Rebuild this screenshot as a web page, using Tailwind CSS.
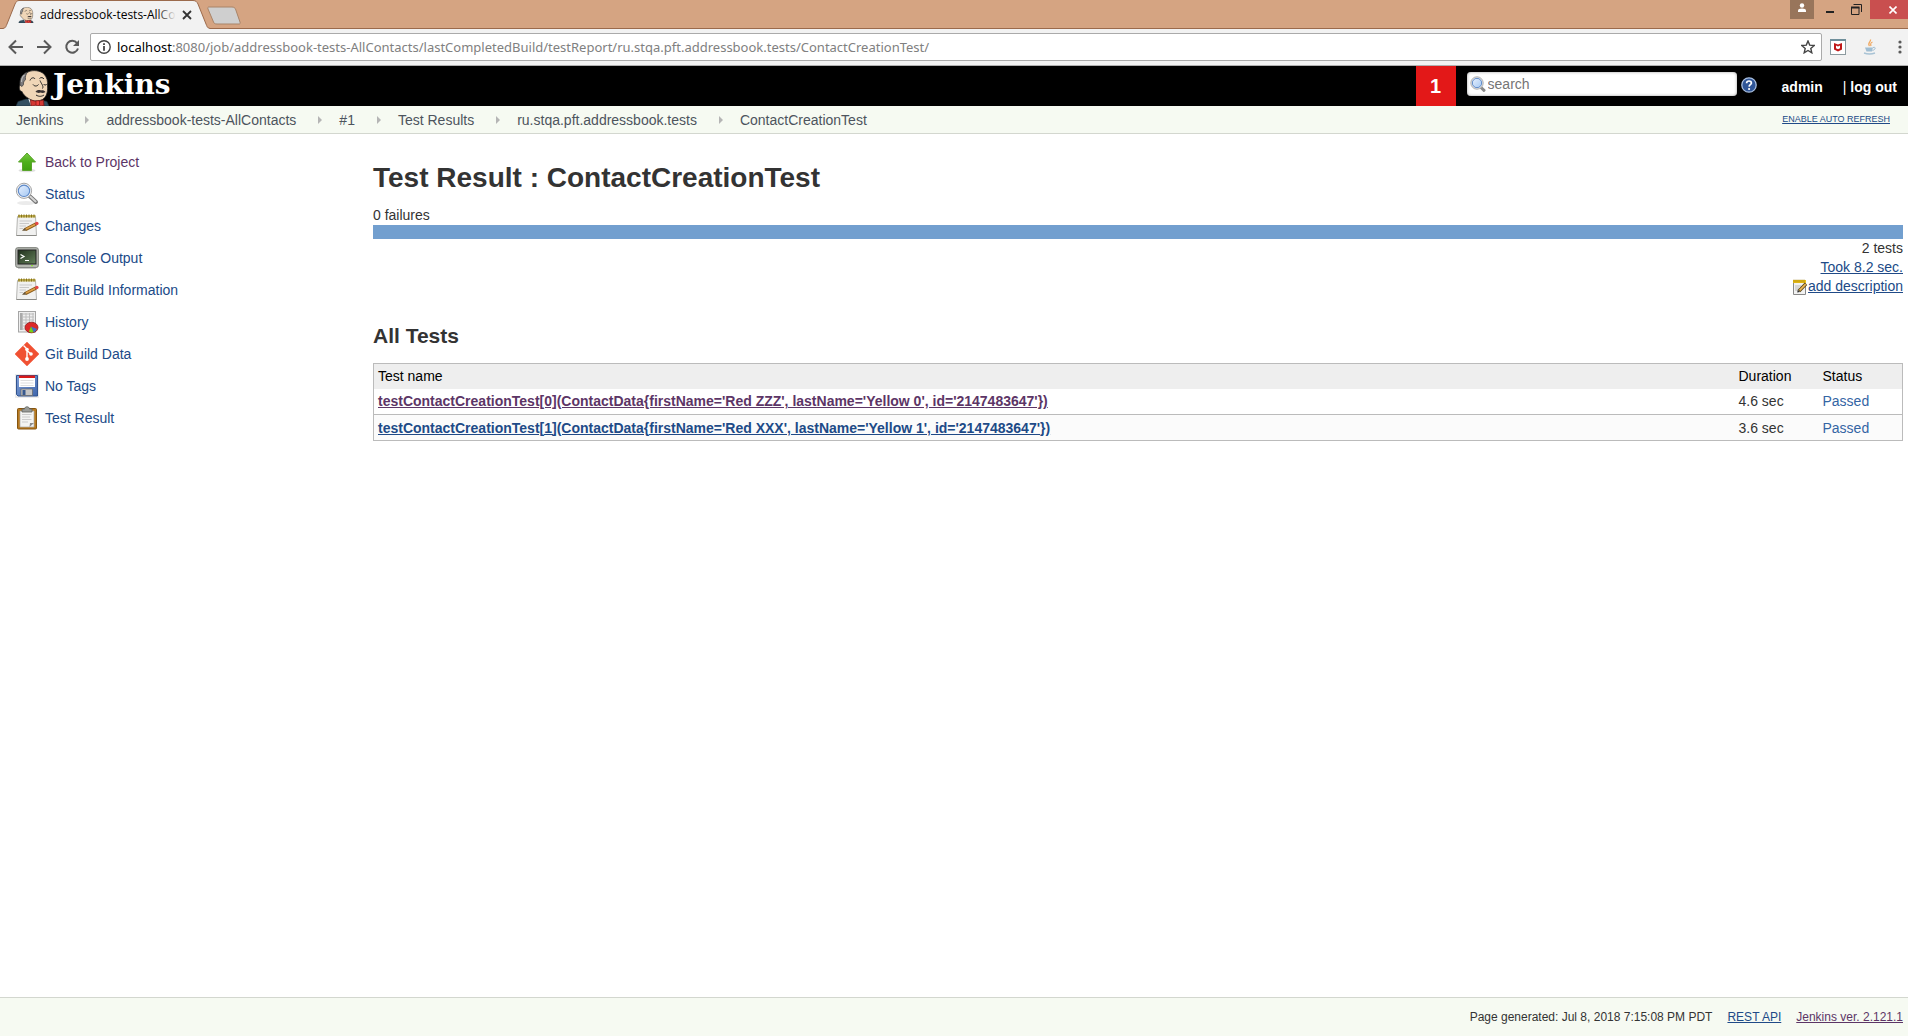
<!DOCTYPE html>
<html lang="en">
<head>
<meta charset="utf-8">
<title>addressbook-tests-AllContacts</title>
<script src="https://cdn.jsdelivr.net/npm/@tailwindcss/browser@4"></script>
</head>
<body class="flex min-h-screen flex-col bg-white font-['Liberation_Sans',Arial,sans-serif] text-sm text-[#333]">

<!-- Shared icons -->
<svg class="absolute h-0 w-0" aria-hidden="true">
  <defs>
    <linearGradient id="gGreen" x1="0" y1="0" x2="0" y2="1"><stop offset="0" stop-color="#7ac943"/><stop offset=".5" stop-color="#4fb01c"/><stop offset="1" stop-color="#3fa010"/></linearGradient>
    <linearGradient id="gLens" x1="0" y1="0" x2="1" y2="1"><stop offset="0" stop-color="#e6f0ff"/><stop offset="1" stop-color="#a5c8f2"/></linearGradient>
    <linearGradient id="gScreen" x1="0" y1="0" x2="1" y2="1"><stop offset="0" stop-color="#1f2f1c"/><stop offset="1" stop-color="#64805a"/></linearGradient>
    <linearGradient id="gBlue" x1="0" y1="0" x2="1" y2="1"><stop offset="0" stop-color="#7f9fd6"/><stop offset="1" stop-color="#3f66ac"/></linearGradient>
    <symbol id="butler" viewBox="0 0 33 36">
      <path d="M0 36 2 31.500 10 29 25 30 31 31.500 33 36Z" fill="#335061" stroke="#1b2a33" stroke-width=".6"/>
      <path d="M12 28 25 30 26 36 15 36Z" fill="#f5f5f5"/>
      <path d="M12 2C17-.500 24 .500 28 4c3 3.500 4 7 3.500 12 .500 6-1 11-5 13.500-4 2-9 2-13-.500C9 26.500 7 24 6 21.500 3.500 22 2.500 17 4 15 4 8 6 4 12 2Z" fill="#f0d6b7" stroke="#222" stroke-width=".8"/>
      <path d="M11.500 2.200C6 4 3.500 9 4 15L6 16.500 7.500 14.500C7 12 8.500 11 9.500 9.500 9 6.500 10 4 11.500 2.200Z" fill="#7d7b7d" stroke="#333" stroke-width=".7"/>
      <path d="M5.500 12C5.500 8.500 7 6 8.500 5" fill="none" stroke="#b8b8b8" stroke-width="1.200"/>
      <path d="M14 10.500C15 7.500 18 7 19 9M23.500 8.500C25 7 27 7.500 28 9M17 14.500C18.500 16.500 21 16.500 22.500 14.500M27.500 14C28.500 15.500 30 15.300 30.800 14M24 10.500C25 13.500 28 16 26.500 18.500M20 25C23 27 26 26.500 28 25" fill="none" stroke="#222" stroke-width="1"/>
      <path d="M19.500 21.500C21.500 20 23.500 19.800 25 20.500 26.500 19.800 28.500 20.500 29.500 22 27.500 23.300 25.500 23 24.500 22.500 23 23.300 21 23 19.500 21.500Z" fill="#3b3434"/>
      <path d="M14.500 30 20.500 31.500 27.500 30 28 36 21 35 15 36Z" fill="#d33833" stroke="#7d1714" stroke-width=".8"/>
      <rect x="20" y="30.800" width="3.500" height="4.500" fill="#ef3d3a" stroke="#7d1714" stroke-width=".7"/>
    </symbol>
    <symbol id="lens" viewBox="0 0 24 24">
      <ellipse cx="11" cy="21" rx="9" ry="2" fill="#000" opacity=".08"/>
      <path d="M14.500 14 21 20" stroke="#777" stroke-width="4" stroke-linecap="round"/>
      <path d="M15.500 14.800 20.600 19.400" stroke="#d4d4d4" stroke-width="2" stroke-linecap="round"/>
      <circle cx="9" cy="8.800" r="7.600" fill="#f4f4f4" stroke="#a5a5a5" stroke-width="1"/>
      <circle cx="9" cy="8.800" r="5.700" fill="url(#gLens)" stroke="#5c88c8" stroke-width="1.100"/>
    </symbol>
    <symbol id="fieldlens" viewBox="0 0 16 16">
      <path d="M10.500 11 14 14.300" stroke="#8a8a8a" stroke-width="3" stroke-linecap="round"/>
      <circle cx="7" cy="7" r="6.200" fill="#eee" stroke="#999" stroke-width=".8"/>
      <circle cx="7" cy="7" r="4.700" fill="url(#gLens)" stroke="#5c88c8" stroke-width="1"/>
    </symbol>
    <symbol id="notepad" viewBox="0 0 24 24">
      <path d="M2.500 2.500H20.500L21.500 21.500H1.500Z" fill="#f1f1f0" stroke="#b5b5b2"/>
      <path d="M1.500 21.500H21.500" stroke="#8a8a86"/>
      <rect x="3" y="1" width="17.500" height="2.500" fill="#c2b04f"/>
      <path d="M4 .500V3.500M6.500 .500V3.500M9 .500V3.500M11.500 .500V3.500M14 .500V3.500M16.500 .500V3.500M19 .500V3.500" stroke="#857220"/>
      <path d="M4.500 7H17M4.500 9.500H14M4.500 12H11M4.500 14.500H8" stroke="#c9c9c9"/>
      <path d="M10.500 15.500 21 10" stroke="#8a5a16" stroke-width="3.200"/>
      <path d="M11 15 20 10.400" stroke="#dda04a" stroke-width="1.700"/>
      <path d="M7 16.800 9.700 13.800 11.300 16.800Z" fill="#6a5636"/>
      <circle cx="21.800" cy="9.500" r="1.800" fill="#e34848"/>
    </symbol>
    <symbol id="smallpad" viewBox="0 0 16 16">
      <path d="M1.500 2.500H13.500V15.500H1.500Z" fill="#f2f2f2" stroke="#888"/>
      <rect x="1" y="1" width="13" height="3" fill="#f0c419"/>
      <path d="M2 .500V3.500M4 .500V3.500M6 .500V3.500M8 .500V3.500M10 .500V3.500M12 .500V3.500" stroke="#97770c" stroke-width=".7"/>
      <path d="M3 7H9M3 9H7M3 11H6" stroke="#bbb"/>
      <path d="M7 12 14 4.800" stroke="#5e4716" stroke-width="3.400"/>
      <path d="M7.600 11.300 13.700 5.100" stroke="#efb956" stroke-width="1.700"/>
      <path d="M5.200 13.500 5.800 10.800 8 13Z" fill="#333"/>
    </symbol>
    <symbol id="crumb" viewBox="0 0 4 8"><path d="M0 0 4 4 0 8Z" fill="#b5b5b5"/></symbol>
  </defs>
</svg>

<!-- Browser chrome -->
<div class="flex h-[29px] shrink-0 items-stretch border-b border-[#9b6a4c] bg-[#d5a482] font-['Open_Sans','Noto_Sans',sans-serif]">
  <div class="relative flex h-[29px] w-[210px] shrink-0 items-center pl-[18px] pr-[16px]">
    <svg class="absolute left-0 top-0 h-[29px] w-[210px]" viewBox="0 0 210 29" aria-hidden="true"><path d="M3 28.500C6 28 6 26 7 24L15 4C16 2 17 .500 19 .500H193C196 .500 197 2 198 4L206 24C207 26 207 28 210 28.500V29H3Z" fill="#f2f2f2"/><path d="M0 28.500H3C6 28 6 26 7 24L15 4C16 2 17 .500 19 .500H193C196 .500 197 2 198 4L206 24C207 26 207 28 210 28.500" fill="none" stroke="#9b6a4c"/></svg>
    <svg class="relative h-4 w-4" aria-hidden="true"><use href="#butler"/></svg>
    <span class="relative ml-[6px] w-[136px] whitespace-nowrap text-xs text-black">addressbook-tests-AllCo<span class="absolute inset-y-0 right-0 w-5 bg-gradient-to-r from-[#f2f2f2]/0 to-[#f2f2f2]"></span></span>
    <button class="relative ml-[6px]" aria-label="Close tab"><svg class="h-[10px] w-[10px]" viewBox="0 0 10 10"><path d="M1 1 9 9M9 1 1 9" stroke="#333" stroke-width="1.800"/></svg></button>
  </div>
  <button class="-ml-1 mt-[6px] h-[19px] w-9 shrink-0" aria-label="New tab"><svg class="h-[19px] w-9" viewBox="0 0 36 19"><path d="M3 1H26C28 1 29 2 29.500 3L34 16C34.500 17.500 34 18 33 18H11C9 18 8 17.500 7.500 16L2 3C1.500 1.500 2 1 3 1Z" fill="#cfcfcf" stroke="#a98468"/></svg></button>
  <div class="ml-auto flex items-start">
    <button class="flex h-[19px] w-6 items-center justify-center bg-[#98755b] pb-[3px]" aria-label="Profile"><svg class="h-[10px] w-[10px]" viewBox="0 0 10 10" fill="#fff"><circle cx="5" cy="2.500" r="2.200"/><path d="M1 9V7.500Q1 5.500 5 5.500T9 7.500V9Z"/></svg></button>
    <button class="flex h-[19px] w-8 items-end justify-center pb-[6px]" aria-label="Minimize"><svg class="h-[2px] w-2" viewBox="0 0 8 2"><rect width="8" height="2" fill="#222"/></svg></button>
    <button class="flex h-[19px] w-5 items-center justify-center" aria-label="Restore"><svg class="h-[11px] w-[11px]" viewBox="0 0 11 11" fill="none" stroke="#222"><path d="M2.500 .500H10.500V8M.500 3.500H8V10.500H.500Z"/><path d="M0 3.500H8.500" stroke-width="2"/></svg></button>
    <button class="ml-1 flex h-[19px] w-[38px] items-center justify-center bg-[#c94f4f] pl-2" aria-label="Close"><svg class="h-2 w-2" viewBox="0 0 8 8"><path d="M.500 .500 7.500 7.500M7.500 .500 .500 7.500" stroke="#fff" stroke-width="1.600"/></svg></button>
  </div>
</div>

<div class="flex h-[37px] shrink-0 items-center border-b border-[#b0b0b0] bg-[#f2f2f2] pl-2">
  <div class="flex items-center gap-3">
    <button aria-label="Back"><svg class="h-4 w-4" viewBox="0 0 16 16" fill="none" stroke="#5a5a5a" stroke-width="2"><path d="M15 8H2M8 1.500 1.500 8 8 14.500"/></svg></button>
    <button aria-label="Forward"><svg class="h-4 w-4" viewBox="0 0 16 16" fill="none" stroke="#5a5a5a" stroke-width="2"><path d="M1 8H14M8 1.500 14.500 8 8 14.500"/></svg></button>
    <button aria-label="Reload"><svg class="h-4 w-4" viewBox="0 0 16 16"><path d="M13 4A6 6 0 1 0 14 9.500" fill="none" stroke="#5a5a5a" stroke-width="2"/><path d="M15 1V7H9Z" fill="#5a5a5a"/></svg></button>
  </div>
  <div class="ml-[10px] flex h-7 grow items-center rounded-xs border border-[#aaa] bg-white pl-[6px] pr-[6px]">
    <svg class="h-[14px] w-[14px] shrink-0" viewBox="0 0 14 14" aria-hidden="true"><circle cx="7" cy="7" r="6.200" fill="none" stroke="#444" stroke-width="1.400"/><path d="M6.100 6H7.900V10.800H6.100ZM6.100 3.200H7.900V4.900H6.100Z" fill="#444"/></svg>
    <div class="grow pl-[6px] font-['Noto_Sans','Open_Sans',sans-serif] text-[13px] text-[#808080]"><span class="text-black">localhost</span>:8080/job/addressbook-tests-AllContacts/lastCompletedBuild/testReport/ru.stqa.pft.addressbook.tests/ContactCreationTest/</div>
    <button aria-label="Bookmark"><svg class="h-[14px] w-[14px]" viewBox="0 0 14 14"><path d="M7 1 8.700 5.100 13.200 5.500 9.800 8.400 10.800 12.800 7 10.500 3.200 12.800 4.200 8.400 .800 5.500 5.300 5.100Z" fill="none" stroke="#444" stroke-width="1.400"/></svg></button>
  </div>
  <div class="flex items-center pl-2">
    <button aria-label="Web protection"><svg class="h-4 w-4" viewBox="0 0 16 16"><rect x=".500" y=".500" width="15" height="15" fill="#fff" stroke="#8c9a9f"/><rect width="16" height="2" fill="#6f8f9b"/><path d="M4 4 8 5.500 12 4V10.500L8 12.500 4 10.500Z" fill="#c01818"/><path d="M6 6.500 8 7.500 10 6.500V9.300L8 10.300 6 9.300Z" fill="#fff"/></svg></button>
    <button class="ml-4" aria-label="Java"><svg class="h-4 w-4" viewBox="0 0 16 16" fill="none"><path d="M8.500 .500C9 3 5 4 7.500 7M10.500 3C8 4 8.500 5 9 7" stroke="#f0a860" stroke-width="1.300"/><path d="M3 8.500H11L10 12.500H4.500Z" fill="#9fbdd2"/><path d="M11 8.500C14 7.500 14 10.500 10.500 11.500" stroke="#9fbdd2"/><path d="M2 14Q7.500 16 13 14" stroke="#a9c3d5" stroke-width="1.400"/></svg></button>
    <button class="ml-[14px]" aria-label="Menu"><svg class="h-4 w-4" viewBox="0 0 16 16" fill="#5a5a5a"><circle cx="8" cy="3" r="1.600"/><circle cx="8" cy="8" r="1.600"/><circle cx="8" cy="13" r="1.600"/></svg></button>
  </div>
</div>

<!-- Jenkins header -->
<header class="flex h-10 shrink-0 items-stretch bg-black text-white">
  <a href="#" class="flex items-center pl-4">
    <svg class="mt-1 h-9 w-[33px]" aria-hidden="true"><use href="#butler"/></svg>
    <span class="ml-1 pb-[2px] font-['DejaVu_Serif',serif] text-[28px] font-bold leading-9">Jenkins</span>
  </a>
  <a href="#" class="ml-auto flex w-10 items-center justify-center bg-[#e31818] text-xl font-bold">1</a>
  <form class="ml-[11px] flex items-start pt-[6px]">
    <label class="flex h-6 w-[270px] items-center rounded-sm bg-white pl-[3px] shadow-[inset_0_0_3px_#999]">
      <svg class="h-4 w-4 shrink-0" aria-hidden="true"><use href="#fieldlens"/></svg>
      <input type="text" placeholder="search" aria-label="search" class="w-full bg-transparent pl-[2px] text-sm text-[#333] outline-none placeholder:text-[#757575]">
    </label>
    <a href="#" class="ml-1 mt-[5px]" aria-label="Help"><svg class="h-4 w-4" viewBox="0 0 16 16"><circle cx="8" cy="8" r="7.200" fill="#2f5597" stroke="#a9bfe0" stroke-width="1.300"/><path d="M5.600 6.200C5.700 3.200 10.500 3.300 10.400 6.100 10.300 7.700 8.200 7.700 8.100 9.600" fill="none" stroke="#fff" stroke-width="1.700"/><circle cx="8.100" cy="12" r="1.100" fill="#fff"/></svg></a>
  </form>
  <div class="flex items-center pl-[25px] pr-[11px] pt-[2px] font-bold">
    <a href="#">admin</a>
    <span class="ml-5"><span class="font-normal">|&nbsp;</span><a href="#">log out</a></span>
  </div>
</header>

<nav class="flex h-7 shrink-0 items-center border-b border-[#d3d7cf] bg-[#f6faf2] pl-4 pr-[18px] text-[#4d545d]">
  <a href="#">Jenkins</a>
  <svg class="ml-[22px] mr-[17px] h-2 w-1" aria-hidden="true"><use href="#crumb"/></svg>
  <a href="#">addressbook-tests-AllContacts</a>
  <svg class="ml-[22px] mr-[17px] h-2 w-1" aria-hidden="true"><use href="#crumb"/></svg>
  <a href="#">#1</a>
  <svg class="ml-[22px] mr-[17px] h-2 w-1" aria-hidden="true"><use href="#crumb"/></svg>
  <a href="#">Test Results</a>
  <svg class="ml-[22px] mr-[17px] h-2 w-1" aria-hidden="true"><use href="#crumb"/></svg>
  <a href="#">ru.stqa.pft.addressbook.tests</a>
  <svg class="ml-[22px] mr-[17px] h-2 w-1" aria-hidden="true"><use href="#crumb"/></svg>
  <a href="#">ContactCreationTest</a>
  <a href="#" class="ml-auto text-[9px] uppercase text-[#204a87] underline">Enable auto refresh</a>
</nav>

<div class="flex grow">
  <aside class="w-[373px] shrink-0 pl-[15px] pt-3">
    <ul class="text-[#204a87]">
      <li><a href="#" class="flex h-8 items-center gap-[6px] text-[#5c3566]"><svg class="h-6 w-6" viewBox="0 0 24 24" aria-hidden="true"><ellipse cx="12" cy="20.500" rx="8.500" ry="1.800" fill="#000" opacity=".12"/><path d="M12 3 20.500 12H16.500V20.500H7.500V12H3.500Z" fill="url(#gGreen)" stroke="#5aa52b"/></svg>Back to Project</a></li>
      <li><a href="#" class="flex h-8 items-center gap-[6px]"><svg class="h-6 w-6" aria-hidden="true"><use href="#lens"/></svg>Status</a></li>
      <li><a href="#" class="flex h-8 items-center gap-[6px]"><svg class="h-6 w-6" aria-hidden="true"><use href="#notepad"/></svg>Changes</a></li>
      <li><a href="#" class="flex h-8 items-center gap-[6px]"><svg class="h-6 w-6" viewBox="0 0 24 24" aria-hidden="true"><rect x=".700" y="1.700" width="22.600" height="19.800" rx="2" fill="#b4b7b0" stroke="#777a74"/><rect x="3" y="4" width="18" height="14" fill="url(#gScreen)" stroke="#222"/><path d="M5.500 8.500 9 10.500 5.500 12.500M10 14.500H14" fill="none" stroke="#fff" stroke-width="1.200"/><path d="M3 22H21" stroke="#999"/><rect x="16" y="19" width="2" height="1.200" fill="#8ae234"/></svg>Console Output</a></li>
      <li><a href="#" class="flex h-8 items-center gap-[6px]"><svg class="h-6 w-6" aria-hidden="true"><use href="#notepad"/></svg>Edit Build Information</a></li>
      <li><a href="#" class="flex h-8 items-center gap-[6px]"><svg class="h-6 w-6" viewBox="0 0 24 24" aria-hidden="true"><rect x="3.500" y="1.500" width="17" height="20.500" fill="#efefef" stroke="#a5a5a5"/><path d="M5 4H19M5 7H19M5 10H19M5 13H19M5 16H19M5 19H19M7.500 3V20M11 3V20M14.500 3V20M18 3V20" stroke="#bdbdbd"/><path d="M5 3V20H7V3Z" fill="#aaa"/><ellipse cx="16.500" cy="17.500" rx="6.500" ry="5.300" fill="#dd2828" stroke="#921818" stroke-width=".800"/><path d="M16 16.500 22 19C21 21.500 19 22.300 18.500 22.300Z" fill="#3f73c4"/><path d="M16 16.500 18.500 22.300C17 22.800 15 22.600 13.800 21.800Z" fill="#73d216"/></svg>History</a></li>
      <li><a href="#" class="flex h-8 items-center gap-[6px]"><svg class="h-6 w-6" viewBox="0 0 24 24" aria-hidden="true"><path d="M12 .700 23.300 12 12 23.300 .700 12Z" fill="#f05133" stroke="#f05133" stroke-width="1.400" stroke-linejoin="round"/><path d="M8.500 3.500 12 7V17M12 8.500 16 12" fill="none" stroke="#fff" stroke-width="1.400"/><circle cx="12" cy="7.500" r="1.800" fill="#fff"/><circle cx="12" cy="17" r="1.900" fill="#fff"/><circle cx="16" cy="12" r="1.800" fill="#fff"/></svg>Git Build Data</a></li>
      <li><a href="#" class="flex h-8 items-center gap-[6px]"><svg class="h-6 w-6" viewBox="0 0 24 24" aria-hidden="true"><rect width="24" height="24" fill="#ececec"/><path d="M1.500 1.500H22.500V22H3L1.500 20.500Z" fill="url(#gBlue)" stroke="#31538f"/><rect x="4" y="2" width="16" height="11" fill="#fff"/><rect x="4" y="1.500" width="16" height="2.500" fill="#d81b1b"/><path d="M5.500 6.500H18.500M5.500 9H18.500M5.500 11.500H18.500" stroke="#d5d5d5" stroke-width=".800"/><rect x="6" y="15" width="11.500" height="6.500" fill="#c6c6c6" stroke="#666" stroke-width=".700"/><rect x="7.500" y="16" width="3" height="5" fill="#38598e"/></svg>No Tags</a></li>
      <li><a href="#" class="flex h-8 items-center gap-[6px]"><svg class="h-6 w-6" viewBox="0 0 24 24" aria-hidden="true"><rect x="2.500" y="2.500" width="19" height="20.500" rx="1" fill="#b97a1f" stroke="#855510"/><path d="M5 5H19V21H5Z" fill="#f4f4f2" stroke="#aaa" stroke-width=".700"/><path d="M7 8.500H16.500M7 11H15M7 13.500H16.500M7 16H13" stroke="#ccc"/><path d="M14.500 21 19 17H15Z" fill="#8b8b8b"/><path d="M7 6V3H9.500C9.500 0 14.500 0 14.500 3H17V6Z" fill="#9a9c98" stroke="#60625e" stroke-width=".800"/></svg>Test Result</a></li>
    </ul>
  </aside>

  <main class="min-w-0 grow pr-[5px] pt-[26px]">
    <h1 class="text-[28px] font-bold leading-9">Test Result : ContactCreationTest</h1>
    <p class="pt-[10px] leading-[19px]">0 failures</p>
    <div class="h-[14px] bg-[#729fcf]"></div>
    <div class="flex flex-col items-end leading-[19px]">
      <span>2 tests</span>
      <a href="#" class="text-[#204a87] underline">Took 8.2 sec.</a>
      <a href="#" class="flex items-center text-[#204a87] underline"><svg class="h-4 w-4" aria-hidden="true"><use href="#smallpad"/></svg>add description</a>
    </div>
    <h2 class="pt-[26px] text-[21px] font-bold leading-7">All Tests</h2>
    <table class="mt-[13px] w-full border-collapse border border-[#bbb] text-left">
      <thead>
        <tr class="h-[25px] bg-[#eee] text-black">
          <th class="px-1 font-normal">Test name</th>
          <th class="w-[84px] px-1 font-normal">Duration</th>
          <th class="w-[84px] px-1 font-normal">Status</th>
        </tr>
      </thead>
      <tbody>
        <tr class="h-[26px] border-b border-[#bbb]">
          <td class="px-1"><a href="#" class="font-bold text-[#5c3566] underline">testContactCreationTest[0](ContactData{firstName='Red ZZZ', lastName='Yellow 0', id='2147483647'})</a></td>
          <td class="px-1">4.6 sec</td>
          <td class="px-1 text-[#3465a4]">Passed</td>
        </tr>
        <tr class="h-[26px] bg-[#fbfbfb]">
          <td class="px-1"><a href="#" class="font-bold text-[#204a87] underline">testContactCreationTest[1](ContactData{firstName='Red XXX', lastName='Yellow 1', id='2147483647'})</a></td>
          <td class="px-1">3.6 sec</td>
          <td class="px-1 text-[#3465a4]">Passed</td>
        </tr>
      </tbody>
    </table>
  </main>
</div>

<footer class="flex h-[39px] shrink-0 items-center justify-end gap-[15px] border-t border-[#d3d7cf] bg-[#f6faf2] pr-[5px] text-xs">
  <span>Page generated: Jul 8, 2018 7:15:08 PM PDT</span>
  <a href="#" class="text-[#204a87] underline">REST API</a>
  <a href="#" class="text-[#5c3566] underline">Jenkins ver. 2.121.1</a>
</footer>
</body>
</html>
